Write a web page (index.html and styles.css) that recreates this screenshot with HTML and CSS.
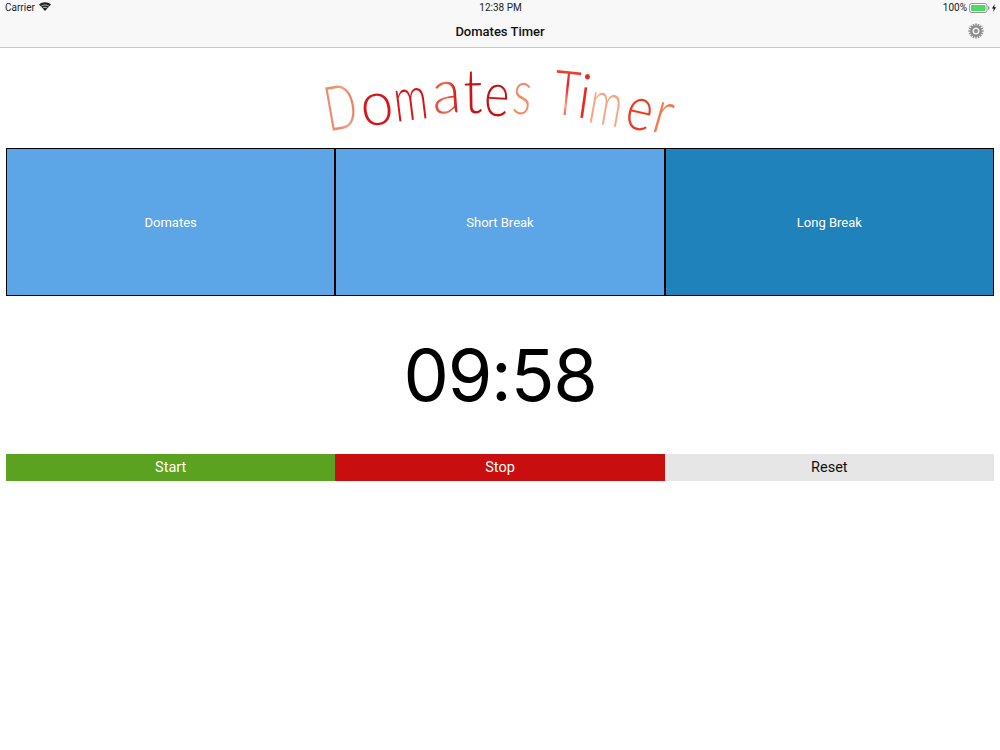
FILE: index.html
```html
<!DOCTYPE html>
<html lang="en">
<head>
<meta charset="utf-8">
<title>Domates Timer</title>
<link rel="stylesheet" href="styles.css">
</head>
<body>
<header class="navbar">
  <div class="status">
    <div class="status-left">
      <span>Carrier</span>
      <svg class="wifi" width="12" height="9" viewBox="0 0 12 9"><path d="M6 9 L0 2.6 C3.4 -.6 8.6 -.6 12 2.6 Z M6 9" fill="#222"/><path d="M1.7 4.6 C4.2 2.5 7.8 2.5 10.3 4.6" fill="none" stroke="#f8f8f8" stroke-width=".7"/><path d="M3.3 6.3 C4.9 5 7.1 5 8.7 6.3" fill="none" stroke="#f8f8f8" stroke-width=".7"/></svg>
    </div>
    <div class="status-time">12:38 PM</div>
    <div class="status-right">
      <span>100%</span>
      <svg width="21" height="10" viewBox="0 0 21 10"><rect x=".5" y=".5" width="17.5" height="9" rx="2" fill="none" stroke="#999"/><rect x="2" y="2" width="14.5" height="6" rx="1" fill="#4cd964"/><rect x="19" y="3.3" width="1.3" height="3.4" rx=".6" fill="#999"/></svg>
      <svg class="bolt" width="4" height="8" viewBox="0 0 4 8"><path d="M2.6 0 L0 4.5 H1.7 L1.2 8 L4 3.2 H2.2 Z" fill="#111"/></svg>
    </div>
  </div>
  <div class="nav-row">
    <h1 class="nav-title">Domates Timer</h1>
    <svg class="gear" width="16" height="16" viewBox="0 0 16 16"><circle cx="8" cy="8" r="4.4" fill="none" stroke="#8a8a8a" stroke-width="2.6"/><path d="M8 .4V15.6M.4 8H15.6M2.6 2.6 13.4 13.4M13.4 2.6 2.6 13.4M5.1 1 10.9 15M10.9 1 5.1 15M1 5.1 15 10.9M15 5.1 1 10.9" stroke="#8a8a8a" stroke-width="1.5"/><circle cx="8" cy="8" r="3.5" fill="#f8f8f8"/><circle cx="8" cy="8" r="2.2" fill="#9a9a9a"/></svg>
  </div>
</header>
<main class="content">
  <div class="logo"><span class="g g1">D</span><span class="g g2">o</span><span class="g g3">m</span><span class="g g4">a</span><span class="g g5">t</span><span class="g g6">e</span><span class="g g7">s</span><span class="g g8"> </span><span class="g g9">T</span><span class="g g10">i</span><span class="g g11">m</span><span class="g g12">e</span><span class="g g13">r</span></div>
  <section class="tabs">
    <div class="tab tab-light">Domates</div>
    <div class="tab tab-light">Short Break</div>
    <div class="tab tab-dark">Long Break</div>
  </section>
  <div class="timer">09:58</div>
  <section class="actions">
    <div class="action action-start">Start</div>
    <div class="action action-stop">Stop</div>
    <div class="action action-reset">Reset</div>
  </section>
</main>
</body>
</html>
```
FILE: styles.css
```css
* { box-sizing: border-box; }
html, body { margin: 0; padding: 0; }
body {
  width: 1000px;
  height: 750px;
  background: #fff;
  color: #000;
  font-family: "Roboto", "Liberation Sans", sans-serif;
  overflow: hidden;
}
.navbar {
  height: 48px;
  background: #f8f8f8;
  border-bottom: 1px solid #c8c8c8;
}
.status {
  height: 15px;
  padding: 0 4px 0 5px;
  display: grid;
  grid-template-columns: 1fr auto 1fr;
  align-items: center;
  font-size: 10px;
  color: #222;
}
.status-left, .status-right { display: flex; align-items: center; }
.status-left { gap: 4px; }
.status-right { justify-content: flex-end; gap: 2px; }
.wifi { margin-top: -2px; }
.nav-row {
  height: 32px;
  position: relative;
  display: flex;
  align-items: center;
  justify-content: center;
}
.nav-title { margin: 0; font-size: 13px; font-weight: 500; color: #111; }
.gear { position: absolute; right: 16px; top: 8px; }
.content { padding: 0 6px; }

.logo {
  height: 100px;
  line-height: 100px;
  padding-right: 4px;
  text-align: center;
  white-space: pre;
  font-family: "Lato", sans-serif;
  font-weight: 300;
  font-size: 62px;
}
.g {
  display: inline-block;
  width: calc(var(--w) + 48px);
  height: 100px;
  margin: 0 -24px;
  text-align: center;
  color: transparent;
  -webkit-background-clip: text;
  background-clip: text;
}
.g1  { --w: 36px; transform: translateY(7px) rotate(-10deg) scaleX(.68);
       background-image: linear-gradient(90deg, #f08a68 40%, #f4a080 60%, #e85a40 85%); }
.g2  { --w: 36px; transform: translateY(3px) rotate(-8deg) scaleX(.95); background-color: #d8141a; }
.g3  { --w: 32px; transform: translateY(-2px) rotate(-7deg) scaleX(.68); background-color: #d8141a; }
.g4  { --w: 40px; transform: translateY(-9px) rotate(-4deg) scaleX(.96);
       background-image: linear-gradient(90deg, #e8503c 40%, #f07050 50%, #d0181a 62%); }
.g5  { --w: 14px; transform: translateY(-9px) rotate(-1deg) scaleX(.9); background-color: #c81414; }
.g6  { --w: 34px; transform: translateY(-6px) rotate(3deg) scaleX(.78); background-color: #c81010; }
.g7  { --w: 18px; transform: translateY(-8px) rotate(6deg) scaleX(.72); background-color: #f58a68; }
.g8  { --w: 20px; }
.g9  { --w: 30px; transform: translateY(-7px) rotate(6deg) scaleX(.72);
       background-image: linear-gradient(180deg, #f05a3a 20%, #e62020 45%, #f9a080 65%, #e62020 85%); }
.g10 { --w: 6px;  transform: translateY(-4px) rotate(8deg) scaleX(.9);  background-color: #e82a20; }
.g11 { --w: 38px; transform: translateY(3px) rotate(10deg) scaleX(.66); background-color: #f9a484; }
.g12 { --w: 30px; transform: translateY(8px) rotate(13deg) scaleX(.82); background-color: #ec3a22; }
.g13 { --w: 18px; transform: translateY(12px) rotate(16deg) scaleX(.82); background-color: #f47a50; }

.tabs { display: grid; grid-template-columns: repeat(3, 1fr); height: 148px; }
.tab {
  display: flex;
  align-items: center;
  justify-content: center;
  color: #fff;
  font-size: 13px;
  border: 1px solid #000;
}
.tab-light { background: #5ca5e6; }
.tab-dark { background: #2082ba; }
.timer {
  height: 158px;
  padding-bottom: 2px;
  display: flex;
  align-items: center;
  justify-content: center;
  font-family: "Inter", sans-serif;
  font-size: 72px;
  letter-spacing: -1.2px;
}
.actions { display: grid; grid-template-columns: repeat(3, 1fr); height: 27px; }
.action {
  display: flex;
  align-items: center;
  justify-content: center;
  padding-bottom: 1px;
  font-size: 14.5px;
}
.action-start { background: #5ba220; color: #fff; }
.action-stop { background: #c80e0e; color: #fff; }
.action-reset { background: #e6e6e6; color: #111; }
```
